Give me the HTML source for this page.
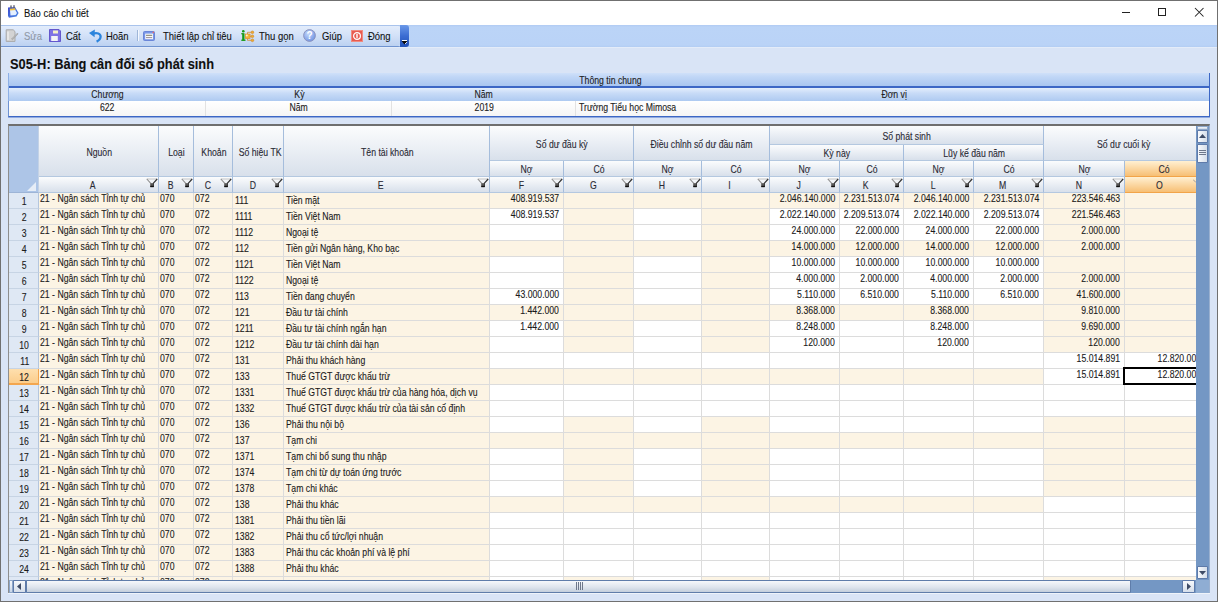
<!DOCTYPE html>
<html><head><meta charset="utf-8"><title>Báo cáo chi tiết</title>
<style>
*{box-sizing:border-box;margin:0;padding:0}
html,body{width:1218px;height:602px;overflow:hidden}
body{position:relative;background:#D9E4F6;font-family:"Liberation Sans",sans-serif;font-size:11px;color:#1b1b1b}
.a{position:absolute}
.t{position:absolute;white-space:nowrap;line-height:12px}
.s{display:inline-block;transform:scaleX(.86);transform-origin:0 0;-webkit-text-stroke:0.1px currentColor}
.g{position:absolute;white-space:nowrap;font-size:11px;line-height:12px}
.gs{display:inline-block;transform:scaleX(.79);transform-origin:0 0;-webkit-text-stroke:0.12px currentColor}
.gr .gs{transform-origin:100% 0}
.gc .gs{transform-origin:50% 0}
.hd{position:absolute;border-right:1px solid #A5BDDC;border-bottom:1px solid #B4C8E0;text-align:center;color:#26262b}
.cl{position:absolute;height:16px;border-right:1px solid #DCDCDC;border-bottom:1px solid #DCDCDC}
.filt{position:absolute;width:10px;height:9px}
</style></head><body>

<div class="a" style="left:0;top:0;width:1218px;height:602px;border:1px solid #707070;"></div>
<div class="a" style="left:1px;top:1px;width:1216px;height:24px;background:#fff"></div>
<svg class="a" style="left:4px;top:2px" width="20" height="20" viewBox="0 0 20 20">
<defs><linearGradient id="tg" x1="0" y1="0" x2="1" y2="1"><stop offset="0" stop-color="#3a48cf"/><stop offset="1" stop-color="#4f8fe6"/></linearGradient></defs>
<path d="M4 5.5 L11 5 L14.6 11 L12.6 14.6 L5 15.8 L4 14 Z" fill="url(#tg)"/>
<path d="M6 8 L11 7.5 L13 11 L11.6 13 L6.5 13.6 Z" fill="#e4f0ff"/>
<path d="M5.7 6.7 L11 6.2 L11.6 8 L6 8.6 Z" fill="#f3c13a"/>
<rect x="6.3" y="3.4" width="1.4" height="2.8" fill="#626270"/><rect x="9.3" y="3.2" width="1.4" height="2.8" fill="#626270"/>
</svg>
<div class="t" style="left:24px;top:7px;font-size:11px;color:#111"><span class="s">Báo cáo chi tiết</span></div>
<div class="a" style="left:1122px;top:12px;width:8px;height:1px;background:#222"></div>
<div class="a" style="left:1158px;top:8px;width:8px;height:8px;border:1px solid #222"></div>
<svg class="a" style="left:1194px;top:7px" width="11" height="11" viewBox="0 0 11 11"><path d="M1 1 L9.5 9.5 M9.5 1 L1 9.5" stroke="#222" stroke-width="1.05"/></svg>
<div class="a" style="left:1px;top:25px;width:1216px;height:22px;background:linear-gradient(#B0CBF3 0px,#BBD4F7 2px,#BAD3F7 20px,#B3CDF3 22px)"></div>
<div class="a" style="left:1px;top:47px;width:1216px;height:1px;background:#E4ECF9"></div>
<div class="a" style="left:1px;top:25px;width:400px;height:22px;background:linear-gradient(#E2ECFB 0%,#D4E2F8 45%,#BCD1F1 100%);border-top:1px solid #A9C3EC;border-bottom:1px solid #6F93D0;border-radius:0 3px 3px 0;box-shadow:inset -1px 0 0 #EEF4FD"></div>
<div class="a" style="left:400px;top:25px;width:9px;height:22px;background:linear-gradient(#6A98E8,#3B6CD2 50%,#2352B8);border-radius:0 3px 3px 0"></div>
<div class="a" style="left:402px;top:40px;width:5px;height:1px;background:#fff"></div>
<svg class="a" style="left:401px;top:41px" width="7" height="4"><path d="M0.5 0 L6.5 0 L3.5 3.5Z" fill="#0a0a0a"/><path d="M4 3 L6 1" stroke="#fff" stroke-width=".8"/></svg>
<svg class="a" style="left:5px;top:29px" width="14" height="14" viewBox="0 0 14 14">
<path d="M1.2 0.8 H8.2 L10 2.6 V12.4 H1.2 Z" fill="#d3d3d3" stroke="#a9a9a9" stroke-width="1"/><path d="M3 2.5 V11" stroke="#eeeeee" stroke-width="1.4"/><path d="M6.5 10 L12.5 4 L13 5 L7.5 10.8 Z" fill="#b8b8b8" stroke="#9c9c9c" stroke-width=".6"/></svg>
<div class="t" style="left:24px;top:30px;color:#8f98a6"><span class="s">Sửa</span></div>
<svg class="a" style="left:49px;top:29px" width="12" height="13" viewBox="0 0 12 13">
<path d="M0.5 0.5 H10 L11.5 2 V12.5 H0.5 Z" fill="#7f72e4" stroke="#6457cc" stroke-width="1"/><rect x="4" y="1.5" width="5" height="3" fill="#f4f0c8"/><rect x="2.2" y="7" width="6.6" height="5" fill="#f3f3f7"/></svg>
<div class="t" style="left:66px;top:30px;color:#111"><span class="s">Cất</span></div>
<svg class="a" style="left:88px;top:28px" width="15" height="15" viewBox="0 0 15 15">
<path d="M5 5.6 C9 4.2 12.6 5.6 12.6 8.6 C12.6 11 10.8 12.6 8.6 13.6" fill="none" stroke="#2c84dc" stroke-width="2.3"/><path d="M1 5 L6.8 1.6 L6.6 9.2 Z" fill="#2c84dc"/></svg>
<div class="t" style="left:106px;top:30px;color:#111"><span class="s">Hoãn</span></div>
<div class="a" style="left:137px;top:30px;width:1px;height:11px;background:#9fb6d8;box-shadow:1px 0 0 #f4f8ff"></div>
<svg class="a" style="left:143px;top:31px" width="12" height="10" viewBox="0 0 12 10">
<rect x="0.5" y="0.5" width="11" height="9" rx="1" fill="#7896e6" stroke="#6a86d8"/><rect x="2.2" y="2.6" width="7.8" height="5.6" fill="#f6f8fc"/><path d="M3 4.3 H9.2" stroke="#7d7f66" stroke-width="1"/><path d="M3 6.6 H9.2" stroke="#9a8f9a" stroke-width="1"/><circle cx="10.3" cy="1.4" r=".8" fill="#e66"/></svg>
<div class="t" style="left:163px;top:30px;color:#111"><span class="s">Thiết lập chỉ tiêu</span></div>
<svg class="a" style="left:236px;top:26px" width="24" height="20" viewBox="0 0 24 20">
<circle cx="7.3" cy="5.2" r="1.3" fill="#169a16"/><rect x="6.2" y="7.2" width="2.3" height="7.2" fill="#169a16"/><rect x="5.2" y="7.2" width="2" height="1.1" fill="#169a16"/><rect x="5.3" y="13.6" width="4.2" height="1.3" fill="#169a16"/>
<path d="M11.5 8 V6.3 H15.3 M14 10.3 H15.3 M11.5 12.5 V14.3 H15.3" fill="none" stroke="#cf8a32" stroke-width=".8"/>
<rect x="9.3" y="8" width="4.8" height="4.6" fill="#f2b43a" stroke="#d98c22" stroke-width=".6"/><circle cx="10.8" cy="9.5" r="1" fill="#fff3c8"/>
<circle cx="16.4" cy="6.3" r="1.4" fill="#eeaa33" stroke="#c98328" stroke-width=".5"/><circle cx="16.4" cy="10.3" r="1.4" fill="#eeaa33" stroke="#c98328" stroke-width=".5"/><circle cx="16.4" cy="14.3" r="1.4" fill="#eeaa33" stroke="#c98328" stroke-width=".5"/></svg>
<div class="t" style="left:259px;top:30px;color:#111"><span class="s">Thu gọn</span></div>
<svg class="a" style="left:303px;top:29px" width="13" height="13" viewBox="0 0 13 13">
<defs><radialGradient id="hg" cx=".4" cy=".35" r=".7"><stop offset="0" stop-color="#c4d8fb"/><stop offset="1" stop-color="#6f93e3"/></radialGradient></defs>
<circle cx="6.5" cy="6.5" r="5.9" fill="url(#hg)" stroke="#8a8fb8" stroke-width=".9"/>
<text x="6.6" y="10.3" font-size="10" font-family="Liberation Sans" font-weight="bold" text-anchor="middle" fill="#fff">?</text></svg>
<div class="t" style="left:322px;top:30px;color:#111"><span class="s">Giúp</span></div>
<svg class="a" style="left:351px;top:30px" width="12" height="12" viewBox="0 0 12 12">
<rect x="0.5" y="0.5" width="11" height="11" fill="#e85b50" stroke="#f08b80"/><circle cx="6" cy="6" r="3.4" fill="none" stroke="#fff" stroke-width="1.2"/><rect x="5.3" y="3.8" width="1.4" height="4.4" rx=".7" fill="#fff"/></svg>
<div class="t" style="left:368px;top:30px;color:#111"><span class="s">Đóng</span></div>
<div class="t" style="left:10px;top:56px;font-size:15px;line-height:16px;font-weight:bold;color:#101010"><span class="s" style="transform:scaleX(.856)">S05-H: Bảng cân đối số phát sinh</span></div>
<div class="a" style="left:8px;top:73px;width:1202px;height:44px;background:#fff"></div>
<div class="a" style="left:8px;top:73px;width:1202px;height:15px;background:linear-gradient(#CFE0F9,#C0D6F6 30%,#A9C6F0);border-bottom:2px solid #3C67C5"></div>
<div class="a" style="left:8px;top:88px;width:1202px;height:13px;background:linear-gradient(#E3EEFC,#C8DBF7 40%,#AECAF1)"></div>
<div class="a" style="left:8px;top:101px;width:1202px;height:16px;background:linear-gradient(#FFFFFF,#F5F5F5);border-bottom:1px solid #3C67C5;box-shadow:0 1px 0 rgba(60,103,197,.45);border-left:1px solid #6E92D2;border-right:1px solid #3C67C5"></div>
<div class="a" style="left:8px;top:73px;width:1px;height:28px;background:#8DB0E6"></div>
<div class="a" style="left:1209px;top:73px;width:1px;height:44px;background:#3C67C5"></div>
<div class="a" style="left:205px;top:101px;width:1px;height:15px;background:#E2E2E2"></div>
<div class="a" style="left:391px;top:101px;width:1px;height:15px;background:#E2E2E2"></div>
<div class="a" style="left:575px;top:101px;width:1px;height:15px;background:#E2E2E2"></div>
<div class="g gc" style="left:9px;top:74px;width:1202px;text-align:center;color:#222"><span class="gs" style="transform:scaleX(0.79)">Thông tin chung</span></div>
<div class="g gc" style="left:9px;top:88px;width:197px;text-align:center;color:#222"><span class="gs" style="transform:scaleX(0.79)">Chương</span></div>
<div class="g gc" style="left:206px;top:88px;width:186px;text-align:center;color:#222"><span class="gs" style="transform:scaleX(0.79)">Kỳ</span></div>
<div class="g gc" style="left:392px;top:88px;width:184px;text-align:center;color:#222"><span class="gs" style="transform:scaleX(0.79)">Năm</span></div>
<div class="g gc" style="left:576px;top:88px;width:636px;text-align:center;color:#222"><span class="gs" style="transform:scaleX(0.79)">Đơn vị</span></div>
<div class="g gc" style="left:9px;top:101px;width:197px;text-align:center;color:#222"><span class="gs" style="transform:scaleX(0.79)">622</span></div>
<div class="g gc" style="left:206px;top:101px;width:186px;text-align:center;color:#222"><span class="gs" style="transform:scaleX(0.79)">Năm</span></div>
<div class="g gc" style="left:392px;top:101px;width:184px;text-align:center;color:#222"><span class="gs" style="transform:scaleX(0.79)">2019</span></div>
<div class="g" style="left:579px;top:101px;color:#222"><span class="gs">Trường Tiểu học Mimosa</span></div>
<div class="a" style="left:8px;top:124px;width:1202px;height:470px;background:#FFFFFF;border-left:1px solid #8E8E8E;border-top:2px solid #6F6F6F;border-right:1px solid #9AB0CF;border-bottom:1px solid #6F86AC"></div>
<div class="a" style="left:9px;top:126px;width:1187px;height:454px;overflow:hidden">
<div class="cl" style="left:30px;top:67px;width:120px;background:#FCF4E4"></div>
<div class="cl" style="left:150px;top:67px;width:35px;background:#FCF4E4"></div>
<div class="cl" style="left:185px;top:67px;width:39px;background:#FCF4E4"></div>
<div class="cl" style="left:224px;top:67px;width:51px;background:#FCF4E4"></div>
<div class="cl" style="left:275px;top:67px;width:206px;background:#FCF4E4"></div>
<div class="cl" style="left:481px;top:67px;width:74px;background:#FCF4E4"></div>
<div class="cl" style="left:555px;top:67px;width:70px;background:#FCF4E4"></div>
<div class="cl" style="left:625px;top:67px;width:68px;background:#FCF4E4"></div>
<div class="cl" style="left:693px;top:67px;width:68px;background:#FCF4E4"></div>
<div class="cl" style="left:761px;top:67px;width:70px;background:#FCF4E4"></div>
<div class="cl" style="left:831px;top:67px;width:64px;background:#FCF4E4"></div>
<div class="cl" style="left:895px;top:67px;width:70px;background:#FCF4E4"></div>
<div class="cl" style="left:965px;top:67px;width:70px;background:#FCF4E4"></div>
<div class="cl" style="left:1035px;top:67px;width:81px;background:#FCF4E4"></div>
<div class="cl" style="left:1116px;top:67px;width:81px;background:#FCF4E4"></div>
<div class="a" style="left:0px;top:67px;width:30px;height:16px;background:#DFE8F4;border-bottom:1px solid #C7D4E4;border-right:1px solid #B4C6DE"></div>
<div class="g gc" style="left:1px;top:69px;width:29px;text-align:center"><span class="gs">1</span></div>
<div class="g" style="left:31px;top:66px;"><span class="gs">21 - Ngân sách Tỉnh tự chủ</span></div>
<div class="g" style="left:151px;top:66px;"><span class="gs">070</span></div>
<div class="g" style="left:186px;top:66px;"><span class="gs">072</span></div>
<div class="g" style="left:226px;top:68px;"><span class="gs">111</span></div>
<div class="g" style="left:277px;top:68px;"><span class="gs">Tiền mặt</span></div>
<div class="g gr" style="right:637px;top:66px"><span class="gs">408.919.537</span></div>
<div class="g gr" style="right:361px;top:66px"><span class="gs">2.046.140.000</span></div>
<div class="g gr" style="right:297px;top:66px"><span class="gs">2.231.513.074</span></div>
<div class="g gr" style="right:227px;top:66px"><span class="gs">2.046.140.000</span></div>
<div class="g gr" style="right:157px;top:66px"><span class="gs">2.231.513.074</span></div>
<div class="g gr" style="right:76px;top:66px"><span class="gs">223.546.463</span></div>
<div class="cl" style="left:30px;top:83px;width:120px;background:#FCF4E4"></div>
<div class="cl" style="left:150px;top:83px;width:35px;background:#FCF4E4"></div>
<div class="cl" style="left:185px;top:83px;width:39px;background:#FCF4E4"></div>
<div class="cl" style="left:224px;top:83px;width:51px;background:#FCF4E4"></div>
<div class="cl" style="left:275px;top:83px;width:206px;background:#FCF4E4"></div>
<div class="cl" style="left:481px;top:83px;width:74px;background:#FFFFFF"></div>
<div class="cl" style="left:555px;top:83px;width:70px;background:#FCF4E4"></div>
<div class="cl" style="left:625px;top:83px;width:68px;background:#FFFFFF"></div>
<div class="cl" style="left:693px;top:83px;width:68px;background:#FCF4E4"></div>
<div class="cl" style="left:761px;top:83px;width:70px;background:#FFFFFF"></div>
<div class="cl" style="left:831px;top:83px;width:64px;background:#FFFFFF"></div>
<div class="cl" style="left:895px;top:83px;width:70px;background:#FFFFFF"></div>
<div class="cl" style="left:965px;top:83px;width:70px;background:#FFFFFF"></div>
<div class="cl" style="left:1035px;top:83px;width:81px;background:#FCF4E4"></div>
<div class="cl" style="left:1116px;top:83px;width:81px;background:#FCF4E4"></div>
<div class="a" style="left:0px;top:83px;width:30px;height:16px;background:#DFE8F4;border-bottom:1px solid #C7D4E4;border-right:1px solid #B4C6DE"></div>
<div class="g gc" style="left:1px;top:85px;width:29px;text-align:center"><span class="gs">2</span></div>
<div class="g" style="left:31px;top:82px;"><span class="gs">21 - Ngân sách Tỉnh tự chủ</span></div>
<div class="g" style="left:151px;top:82px;"><span class="gs">070</span></div>
<div class="g" style="left:186px;top:82px;"><span class="gs">072</span></div>
<div class="g" style="left:226px;top:84px;"><span class="gs">1111</span></div>
<div class="g" style="left:277px;top:84px;"><span class="gs">Tiền Việt Nam</span></div>
<div class="g gr" style="right:637px;top:82px"><span class="gs">408.919.537</span></div>
<div class="g gr" style="right:361px;top:82px"><span class="gs">2.022.140.000</span></div>
<div class="g gr" style="right:297px;top:82px"><span class="gs">2.209.513.074</span></div>
<div class="g gr" style="right:227px;top:82px"><span class="gs">2.022.140.000</span></div>
<div class="g gr" style="right:157px;top:82px"><span class="gs">2.209.513.074</span></div>
<div class="g gr" style="right:76px;top:82px"><span class="gs">221.546.463</span></div>
<div class="cl" style="left:30px;top:99px;width:120px;background:#FCF4E4"></div>
<div class="cl" style="left:150px;top:99px;width:35px;background:#FCF4E4"></div>
<div class="cl" style="left:185px;top:99px;width:39px;background:#FCF4E4"></div>
<div class="cl" style="left:224px;top:99px;width:51px;background:#FCF4E4"></div>
<div class="cl" style="left:275px;top:99px;width:206px;background:#FCF4E4"></div>
<div class="cl" style="left:481px;top:99px;width:74px;background:#FFFFFF"></div>
<div class="cl" style="left:555px;top:99px;width:70px;background:#FCF4E4"></div>
<div class="cl" style="left:625px;top:99px;width:68px;background:#FFFFFF"></div>
<div class="cl" style="left:693px;top:99px;width:68px;background:#FCF4E4"></div>
<div class="cl" style="left:761px;top:99px;width:70px;background:#FFFFFF"></div>
<div class="cl" style="left:831px;top:99px;width:64px;background:#FFFFFF"></div>
<div class="cl" style="left:895px;top:99px;width:70px;background:#FFFFFF"></div>
<div class="cl" style="left:965px;top:99px;width:70px;background:#FFFFFF"></div>
<div class="cl" style="left:1035px;top:99px;width:81px;background:#FCF4E4"></div>
<div class="cl" style="left:1116px;top:99px;width:81px;background:#FCF4E4"></div>
<div class="a" style="left:0px;top:99px;width:30px;height:16px;background:#DFE8F4;border-bottom:1px solid #C7D4E4;border-right:1px solid #B4C6DE"></div>
<div class="g gc" style="left:1px;top:101px;width:29px;text-align:center"><span class="gs">3</span></div>
<div class="g" style="left:31px;top:98px;"><span class="gs">21 - Ngân sách Tỉnh tự chủ</span></div>
<div class="g" style="left:151px;top:98px;"><span class="gs">070</span></div>
<div class="g" style="left:186px;top:98px;"><span class="gs">072</span></div>
<div class="g" style="left:226px;top:100px;"><span class="gs">1112</span></div>
<div class="g" style="left:277px;top:100px;"><span class="gs">Ngoại tệ</span></div>
<div class="g gr" style="right:361px;top:98px"><span class="gs">24.000.000</span></div>
<div class="g gr" style="right:297px;top:98px"><span class="gs">22.000.000</span></div>
<div class="g gr" style="right:227px;top:98px"><span class="gs">24.000.000</span></div>
<div class="g gr" style="right:157px;top:98px"><span class="gs">22.000.000</span></div>
<div class="g gr" style="right:76px;top:98px"><span class="gs">2.000.000</span></div>
<div class="cl" style="left:30px;top:115px;width:120px;background:#FCF4E4"></div>
<div class="cl" style="left:150px;top:115px;width:35px;background:#FCF4E4"></div>
<div class="cl" style="left:185px;top:115px;width:39px;background:#FCF4E4"></div>
<div class="cl" style="left:224px;top:115px;width:51px;background:#FCF4E4"></div>
<div class="cl" style="left:275px;top:115px;width:206px;background:#FCF4E4"></div>
<div class="cl" style="left:481px;top:115px;width:74px;background:#FCF4E4"></div>
<div class="cl" style="left:555px;top:115px;width:70px;background:#FCF4E4"></div>
<div class="cl" style="left:625px;top:115px;width:68px;background:#FCF4E4"></div>
<div class="cl" style="left:693px;top:115px;width:68px;background:#FCF4E4"></div>
<div class="cl" style="left:761px;top:115px;width:70px;background:#FCF4E4"></div>
<div class="cl" style="left:831px;top:115px;width:64px;background:#FCF4E4"></div>
<div class="cl" style="left:895px;top:115px;width:70px;background:#FCF4E4"></div>
<div class="cl" style="left:965px;top:115px;width:70px;background:#FCF4E4"></div>
<div class="cl" style="left:1035px;top:115px;width:81px;background:#FCF4E4"></div>
<div class="cl" style="left:1116px;top:115px;width:81px;background:#FCF4E4"></div>
<div class="a" style="left:0px;top:115px;width:30px;height:16px;background:#DFE8F4;border-bottom:1px solid #C7D4E4;border-right:1px solid #B4C6DE"></div>
<div class="g gc" style="left:1px;top:117px;width:29px;text-align:center"><span class="gs">4</span></div>
<div class="g" style="left:31px;top:114px;"><span class="gs">21 - Ngân sách Tỉnh tự chủ</span></div>
<div class="g" style="left:151px;top:114px;"><span class="gs">070</span></div>
<div class="g" style="left:186px;top:114px;"><span class="gs">072</span></div>
<div class="g" style="left:226px;top:116px;"><span class="gs">112</span></div>
<div class="g" style="left:277px;top:116px;"><span class="gs">Tiền gửi Ngân hàng, Kho bạc</span></div>
<div class="g gr" style="right:361px;top:114px"><span class="gs">14.000.000</span></div>
<div class="g gr" style="right:297px;top:114px"><span class="gs">12.000.000</span></div>
<div class="g gr" style="right:227px;top:114px"><span class="gs">14.000.000</span></div>
<div class="g gr" style="right:157px;top:114px"><span class="gs">12.000.000</span></div>
<div class="g gr" style="right:76px;top:114px"><span class="gs">2.000.000</span></div>
<div class="cl" style="left:30px;top:131px;width:120px;background:#FCF4E4"></div>
<div class="cl" style="left:150px;top:131px;width:35px;background:#FCF4E4"></div>
<div class="cl" style="left:185px;top:131px;width:39px;background:#FCF4E4"></div>
<div class="cl" style="left:224px;top:131px;width:51px;background:#FCF4E4"></div>
<div class="cl" style="left:275px;top:131px;width:206px;background:#FCF4E4"></div>
<div class="cl" style="left:481px;top:131px;width:74px;background:#FFFFFF"></div>
<div class="cl" style="left:555px;top:131px;width:70px;background:#FCF4E4"></div>
<div class="cl" style="left:625px;top:131px;width:68px;background:#FFFFFF"></div>
<div class="cl" style="left:693px;top:131px;width:68px;background:#FCF4E4"></div>
<div class="cl" style="left:761px;top:131px;width:70px;background:#FFFFFF"></div>
<div class="cl" style="left:831px;top:131px;width:64px;background:#FFFFFF"></div>
<div class="cl" style="left:895px;top:131px;width:70px;background:#FFFFFF"></div>
<div class="cl" style="left:965px;top:131px;width:70px;background:#FFFFFF"></div>
<div class="cl" style="left:1035px;top:131px;width:81px;background:#FCF4E4"></div>
<div class="cl" style="left:1116px;top:131px;width:81px;background:#FCF4E4"></div>
<div class="a" style="left:0px;top:131px;width:30px;height:16px;background:#DFE8F4;border-bottom:1px solid #C7D4E4;border-right:1px solid #B4C6DE"></div>
<div class="g gc" style="left:1px;top:133px;width:29px;text-align:center"><span class="gs">5</span></div>
<div class="g" style="left:31px;top:130px;"><span class="gs">21 - Ngân sách Tỉnh tự chủ</span></div>
<div class="g" style="left:151px;top:130px;"><span class="gs">070</span></div>
<div class="g" style="left:186px;top:130px;"><span class="gs">072</span></div>
<div class="g" style="left:226px;top:132px;"><span class="gs">1121</span></div>
<div class="g" style="left:277px;top:132px;"><span class="gs">Tiền Việt Nam</span></div>
<div class="g gr" style="right:361px;top:130px"><span class="gs">10.000.000</span></div>
<div class="g gr" style="right:297px;top:130px"><span class="gs">10.000.000</span></div>
<div class="g gr" style="right:227px;top:130px"><span class="gs">10.000.000</span></div>
<div class="g gr" style="right:157px;top:130px"><span class="gs">10.000.000</span></div>
<div class="cl" style="left:30px;top:147px;width:120px;background:#FCF4E4"></div>
<div class="cl" style="left:150px;top:147px;width:35px;background:#FCF4E4"></div>
<div class="cl" style="left:185px;top:147px;width:39px;background:#FCF4E4"></div>
<div class="cl" style="left:224px;top:147px;width:51px;background:#FCF4E4"></div>
<div class="cl" style="left:275px;top:147px;width:206px;background:#FCF4E4"></div>
<div class="cl" style="left:481px;top:147px;width:74px;background:#FFFFFF"></div>
<div class="cl" style="left:555px;top:147px;width:70px;background:#FCF4E4"></div>
<div class="cl" style="left:625px;top:147px;width:68px;background:#FFFFFF"></div>
<div class="cl" style="left:693px;top:147px;width:68px;background:#FCF4E4"></div>
<div class="cl" style="left:761px;top:147px;width:70px;background:#FFFFFF"></div>
<div class="cl" style="left:831px;top:147px;width:64px;background:#FFFFFF"></div>
<div class="cl" style="left:895px;top:147px;width:70px;background:#FFFFFF"></div>
<div class="cl" style="left:965px;top:147px;width:70px;background:#FFFFFF"></div>
<div class="cl" style="left:1035px;top:147px;width:81px;background:#FCF4E4"></div>
<div class="cl" style="left:1116px;top:147px;width:81px;background:#FCF4E4"></div>
<div class="a" style="left:0px;top:147px;width:30px;height:16px;background:#DFE8F4;border-bottom:1px solid #C7D4E4;border-right:1px solid #B4C6DE"></div>
<div class="g gc" style="left:1px;top:149px;width:29px;text-align:center"><span class="gs">6</span></div>
<div class="g" style="left:31px;top:146px;"><span class="gs">21 - Ngân sách Tỉnh tự chủ</span></div>
<div class="g" style="left:151px;top:146px;"><span class="gs">070</span></div>
<div class="g" style="left:186px;top:146px;"><span class="gs">072</span></div>
<div class="g" style="left:226px;top:148px;"><span class="gs">1122</span></div>
<div class="g" style="left:277px;top:148px;"><span class="gs">Ngoại tệ</span></div>
<div class="g gr" style="right:361px;top:146px"><span class="gs">4.000.000</span></div>
<div class="g gr" style="right:297px;top:146px"><span class="gs">2.000.000</span></div>
<div class="g gr" style="right:227px;top:146px"><span class="gs">4.000.000</span></div>
<div class="g gr" style="right:157px;top:146px"><span class="gs">2.000.000</span></div>
<div class="g gr" style="right:76px;top:146px"><span class="gs">2.000.000</span></div>
<div class="cl" style="left:30px;top:163px;width:120px;background:#FCF4E4"></div>
<div class="cl" style="left:150px;top:163px;width:35px;background:#FCF4E4"></div>
<div class="cl" style="left:185px;top:163px;width:39px;background:#FCF4E4"></div>
<div class="cl" style="left:224px;top:163px;width:51px;background:#FCF4E4"></div>
<div class="cl" style="left:275px;top:163px;width:206px;background:#FCF4E4"></div>
<div class="cl" style="left:481px;top:163px;width:74px;background:#FFFFFF"></div>
<div class="cl" style="left:555px;top:163px;width:70px;background:#FCF4E4"></div>
<div class="cl" style="left:625px;top:163px;width:68px;background:#FFFFFF"></div>
<div class="cl" style="left:693px;top:163px;width:68px;background:#FCF4E4"></div>
<div class="cl" style="left:761px;top:163px;width:70px;background:#FFFFFF"></div>
<div class="cl" style="left:831px;top:163px;width:64px;background:#FFFFFF"></div>
<div class="cl" style="left:895px;top:163px;width:70px;background:#FFFFFF"></div>
<div class="cl" style="left:965px;top:163px;width:70px;background:#FFFFFF"></div>
<div class="cl" style="left:1035px;top:163px;width:81px;background:#FCF4E4"></div>
<div class="cl" style="left:1116px;top:163px;width:81px;background:#FCF4E4"></div>
<div class="a" style="left:0px;top:163px;width:30px;height:16px;background:#DFE8F4;border-bottom:1px solid #C7D4E4;border-right:1px solid #B4C6DE"></div>
<div class="g gc" style="left:1px;top:165px;width:29px;text-align:center"><span class="gs">7</span></div>
<div class="g" style="left:31px;top:162px;"><span class="gs">21 - Ngân sách Tỉnh tự chủ</span></div>
<div class="g" style="left:151px;top:162px;"><span class="gs">070</span></div>
<div class="g" style="left:186px;top:162px;"><span class="gs">072</span></div>
<div class="g" style="left:226px;top:164px;"><span class="gs">113</span></div>
<div class="g" style="left:277px;top:164px;"><span class="gs">Tiền đang chuyển</span></div>
<div class="g gr" style="right:637px;top:162px"><span class="gs">43.000.000</span></div>
<div class="g gr" style="right:361px;top:162px"><span class="gs">5.110.000</span></div>
<div class="g gr" style="right:297px;top:162px"><span class="gs">6.510.000</span></div>
<div class="g gr" style="right:227px;top:162px"><span class="gs">5.110.000</span></div>
<div class="g gr" style="right:157px;top:162px"><span class="gs">6.510.000</span></div>
<div class="g gr" style="right:76px;top:162px"><span class="gs">41.600.000</span></div>
<div class="cl" style="left:30px;top:179px;width:120px;background:#FCF4E4"></div>
<div class="cl" style="left:150px;top:179px;width:35px;background:#FCF4E4"></div>
<div class="cl" style="left:185px;top:179px;width:39px;background:#FCF4E4"></div>
<div class="cl" style="left:224px;top:179px;width:51px;background:#FCF4E4"></div>
<div class="cl" style="left:275px;top:179px;width:206px;background:#FCF4E4"></div>
<div class="cl" style="left:481px;top:179px;width:74px;background:#FCF4E4"></div>
<div class="cl" style="left:555px;top:179px;width:70px;background:#FCF4E4"></div>
<div class="cl" style="left:625px;top:179px;width:68px;background:#FCF4E4"></div>
<div class="cl" style="left:693px;top:179px;width:68px;background:#FCF4E4"></div>
<div class="cl" style="left:761px;top:179px;width:70px;background:#FCF4E4"></div>
<div class="cl" style="left:831px;top:179px;width:64px;background:#FCF4E4"></div>
<div class="cl" style="left:895px;top:179px;width:70px;background:#FCF4E4"></div>
<div class="cl" style="left:965px;top:179px;width:70px;background:#FCF4E4"></div>
<div class="cl" style="left:1035px;top:179px;width:81px;background:#FCF4E4"></div>
<div class="cl" style="left:1116px;top:179px;width:81px;background:#FCF4E4"></div>
<div class="a" style="left:0px;top:179px;width:30px;height:16px;background:#DFE8F4;border-bottom:1px solid #C7D4E4;border-right:1px solid #B4C6DE"></div>
<div class="g gc" style="left:1px;top:181px;width:29px;text-align:center"><span class="gs">8</span></div>
<div class="g" style="left:31px;top:178px;"><span class="gs">21 - Ngân sách Tỉnh tự chủ</span></div>
<div class="g" style="left:151px;top:178px;"><span class="gs">070</span></div>
<div class="g" style="left:186px;top:178px;"><span class="gs">072</span></div>
<div class="g" style="left:226px;top:180px;"><span class="gs">121</span></div>
<div class="g" style="left:277px;top:180px;"><span class="gs">Đầu tư tài chính</span></div>
<div class="g gr" style="right:637px;top:178px"><span class="gs">1.442.000</span></div>
<div class="g gr" style="right:361px;top:178px"><span class="gs">8.368.000</span></div>
<div class="g gr" style="right:227px;top:178px"><span class="gs">8.368.000</span></div>
<div class="g gr" style="right:76px;top:178px"><span class="gs">9.810.000</span></div>
<div class="cl" style="left:30px;top:195px;width:120px;background:#FCF4E4"></div>
<div class="cl" style="left:150px;top:195px;width:35px;background:#FCF4E4"></div>
<div class="cl" style="left:185px;top:195px;width:39px;background:#FCF4E4"></div>
<div class="cl" style="left:224px;top:195px;width:51px;background:#FCF4E4"></div>
<div class="cl" style="left:275px;top:195px;width:206px;background:#FCF4E4"></div>
<div class="cl" style="left:481px;top:195px;width:74px;background:#FFFFFF"></div>
<div class="cl" style="left:555px;top:195px;width:70px;background:#FCF4E4"></div>
<div class="cl" style="left:625px;top:195px;width:68px;background:#FFFFFF"></div>
<div class="cl" style="left:693px;top:195px;width:68px;background:#FCF4E4"></div>
<div class="cl" style="left:761px;top:195px;width:70px;background:#FFFFFF"></div>
<div class="cl" style="left:831px;top:195px;width:64px;background:#FFFFFF"></div>
<div class="cl" style="left:895px;top:195px;width:70px;background:#FFFFFF"></div>
<div class="cl" style="left:965px;top:195px;width:70px;background:#FFFFFF"></div>
<div class="cl" style="left:1035px;top:195px;width:81px;background:#FCF4E4"></div>
<div class="cl" style="left:1116px;top:195px;width:81px;background:#FCF4E4"></div>
<div class="a" style="left:0px;top:195px;width:30px;height:16px;background:#DFE8F4;border-bottom:1px solid #C7D4E4;border-right:1px solid #B4C6DE"></div>
<div class="g gc" style="left:1px;top:197px;width:29px;text-align:center"><span class="gs">9</span></div>
<div class="g" style="left:31px;top:194px;"><span class="gs">21 - Ngân sách Tỉnh tự chủ</span></div>
<div class="g" style="left:151px;top:194px;"><span class="gs">070</span></div>
<div class="g" style="left:186px;top:194px;"><span class="gs">072</span></div>
<div class="g" style="left:226px;top:196px;"><span class="gs">1211</span></div>
<div class="g" style="left:277px;top:196px;"><span class="gs">Đầu tư tài chính ngắn hạn</span></div>
<div class="g gr" style="right:637px;top:194px"><span class="gs">1.442.000</span></div>
<div class="g gr" style="right:361px;top:194px"><span class="gs">8.248.000</span></div>
<div class="g gr" style="right:227px;top:194px"><span class="gs">8.248.000</span></div>
<div class="g gr" style="right:76px;top:194px"><span class="gs">9.690.000</span></div>
<div class="cl" style="left:30px;top:211px;width:120px;background:#FCF4E4"></div>
<div class="cl" style="left:150px;top:211px;width:35px;background:#FCF4E4"></div>
<div class="cl" style="left:185px;top:211px;width:39px;background:#FCF4E4"></div>
<div class="cl" style="left:224px;top:211px;width:51px;background:#FCF4E4"></div>
<div class="cl" style="left:275px;top:211px;width:206px;background:#FCF4E4"></div>
<div class="cl" style="left:481px;top:211px;width:74px;background:#FFFFFF"></div>
<div class="cl" style="left:555px;top:211px;width:70px;background:#FCF4E4"></div>
<div class="cl" style="left:625px;top:211px;width:68px;background:#FFFFFF"></div>
<div class="cl" style="left:693px;top:211px;width:68px;background:#FCF4E4"></div>
<div class="cl" style="left:761px;top:211px;width:70px;background:#FFFFFF"></div>
<div class="cl" style="left:831px;top:211px;width:64px;background:#FFFFFF"></div>
<div class="cl" style="left:895px;top:211px;width:70px;background:#FFFFFF"></div>
<div class="cl" style="left:965px;top:211px;width:70px;background:#FFFFFF"></div>
<div class="cl" style="left:1035px;top:211px;width:81px;background:#FCF4E4"></div>
<div class="cl" style="left:1116px;top:211px;width:81px;background:#FCF4E4"></div>
<div class="a" style="left:0px;top:211px;width:30px;height:16px;background:#DFE8F4;border-bottom:1px solid #C7D4E4;border-right:1px solid #B4C6DE"></div>
<div class="g gc" style="left:1px;top:213px;width:29px;text-align:center"><span class="gs">10</span></div>
<div class="g" style="left:31px;top:210px;"><span class="gs">21 - Ngân sách Tỉnh tự chủ</span></div>
<div class="g" style="left:151px;top:210px;"><span class="gs">070</span></div>
<div class="g" style="left:186px;top:210px;"><span class="gs">072</span></div>
<div class="g" style="left:226px;top:212px;"><span class="gs">1212</span></div>
<div class="g" style="left:277px;top:212px;"><span class="gs">Đầu tư tài chính dài hạn</span></div>
<div class="g gr" style="right:361px;top:210px"><span class="gs">120.000</span></div>
<div class="g gr" style="right:227px;top:210px"><span class="gs">120.000</span></div>
<div class="g gr" style="right:76px;top:210px"><span class="gs">120.000</span></div>
<div class="cl" style="left:30px;top:227px;width:120px;background:#FCF4E4"></div>
<div class="cl" style="left:150px;top:227px;width:35px;background:#FCF4E4"></div>
<div class="cl" style="left:185px;top:227px;width:39px;background:#FCF4E4"></div>
<div class="cl" style="left:224px;top:227px;width:51px;background:#FCF4E4"></div>
<div class="cl" style="left:275px;top:227px;width:206px;background:#FCF4E4"></div>
<div class="cl" style="left:481px;top:227px;width:74px;background:#FFFFFF"></div>
<div class="cl" style="left:555px;top:227px;width:70px;background:#FFFFFF"></div>
<div class="cl" style="left:625px;top:227px;width:68px;background:#FFFFFF"></div>
<div class="cl" style="left:693px;top:227px;width:68px;background:#FFFFFF"></div>
<div class="cl" style="left:761px;top:227px;width:70px;background:#FFFFFF"></div>
<div class="cl" style="left:831px;top:227px;width:64px;background:#FFFFFF"></div>
<div class="cl" style="left:895px;top:227px;width:70px;background:#FFFFFF"></div>
<div class="cl" style="left:965px;top:227px;width:70px;background:#FFFFFF"></div>
<div class="cl" style="left:1035px;top:227px;width:81px;background:#FFFFFF"></div>
<div class="cl" style="left:1116px;top:227px;width:81px;background:#FFFFFF"></div>
<div class="a" style="left:0px;top:227px;width:30px;height:16px;background:#DFE8F4;border-bottom:1px solid #C7D4E4;border-right:1px solid #B4C6DE"></div>
<div class="g gc" style="left:1px;top:229px;width:29px;text-align:center"><span class="gs">11</span></div>
<div class="g" style="left:31px;top:226px;"><span class="gs">21 - Ngân sách Tỉnh tự chủ</span></div>
<div class="g" style="left:151px;top:226px;"><span class="gs">070</span></div>
<div class="g" style="left:186px;top:226px;"><span class="gs">072</span></div>
<div class="g" style="left:226px;top:228px;"><span class="gs">131</span></div>
<div class="g" style="left:277px;top:228px;"><span class="gs">Phải thu khách hàng</span></div>
<div class="g gr" style="right:76px;top:226px"><span class="gs">15.014.891</span></div>
<div class="g gr" style="right:-5px;top:226px"><span class="gs">12.820.000</span></div>
<div class="cl" style="left:30px;top:243px;width:120px;background:#FCF4E4"></div>
<div class="cl" style="left:150px;top:243px;width:35px;background:#FCF4E4"></div>
<div class="cl" style="left:185px;top:243px;width:39px;background:#FCF4E4"></div>
<div class="cl" style="left:224px;top:243px;width:51px;background:#FCF4E4"></div>
<div class="cl" style="left:275px;top:243px;width:206px;background:#FCF4E4"></div>
<div class="cl" style="left:481px;top:243px;width:74px;background:#FCF4E4"></div>
<div class="cl" style="left:555px;top:243px;width:70px;background:#FCF4E4"></div>
<div class="cl" style="left:625px;top:243px;width:68px;background:#FCF4E4"></div>
<div class="cl" style="left:693px;top:243px;width:68px;background:#FCF4E4"></div>
<div class="cl" style="left:761px;top:243px;width:70px;background:#FCF4E4"></div>
<div class="cl" style="left:831px;top:243px;width:64px;background:#FCF4E4"></div>
<div class="cl" style="left:895px;top:243px;width:70px;background:#FCF4E4"></div>
<div class="cl" style="left:965px;top:243px;width:70px;background:#FCF4E4"></div>
<div class="cl" style="left:1035px;top:243px;width:81px;background:#FFFFFF"></div>
<div class="cl" style="left:1116px;top:243px;width:81px;background:#FFFFFF"></div>
<div class="a" style="left:0px;top:243px;width:30px;height:16px;background:linear-gradient(#FEDFAE,#FBCD8C);border-bottom:2px solid #F3A64F;border-right:1px solid #F3A64F"></div>
<div class="g gc" style="left:1px;top:245px;width:29px;text-align:center"><span class="gs">12</span></div>
<div class="g" style="left:31px;top:242px;"><span class="gs">21 - Ngân sách Tỉnh tự chủ</span></div>
<div class="g" style="left:151px;top:242px;"><span class="gs">070</span></div>
<div class="g" style="left:186px;top:242px;"><span class="gs">072</span></div>
<div class="g" style="left:226px;top:244px;"><span class="gs">133</span></div>
<div class="g" style="left:277px;top:244px;"><span class="gs">Thuế GTGT được khấu trừ</span></div>
<div class="g gr" style="right:76px;top:242px"><span class="gs">15.014.891</span></div>
<div class="g gr" style="right:-5px;top:242px"><span class="gs">12.820.000</span></div>
<div class="cl" style="left:30px;top:259px;width:120px;background:#FCF4E4"></div>
<div class="cl" style="left:150px;top:259px;width:35px;background:#FCF4E4"></div>
<div class="cl" style="left:185px;top:259px;width:39px;background:#FCF4E4"></div>
<div class="cl" style="left:224px;top:259px;width:51px;background:#FCF4E4"></div>
<div class="cl" style="left:275px;top:259px;width:206px;background:#FCF4E4"></div>
<div class="cl" style="left:481px;top:259px;width:74px;background:#FFFFFF"></div>
<div class="cl" style="left:555px;top:259px;width:70px;background:#FFFFFF"></div>
<div class="cl" style="left:625px;top:259px;width:68px;background:#FFFFFF"></div>
<div class="cl" style="left:693px;top:259px;width:68px;background:#FFFFFF"></div>
<div class="cl" style="left:761px;top:259px;width:70px;background:#FFFFFF"></div>
<div class="cl" style="left:831px;top:259px;width:64px;background:#FFFFFF"></div>
<div class="cl" style="left:895px;top:259px;width:70px;background:#FFFFFF"></div>
<div class="cl" style="left:965px;top:259px;width:70px;background:#FFFFFF"></div>
<div class="cl" style="left:1035px;top:259px;width:81px;background:#FFFFFF"></div>
<div class="cl" style="left:1116px;top:259px;width:81px;background:#FFFFFF"></div>
<div class="a" style="left:0px;top:259px;width:30px;height:16px;background:#DFE8F4;border-bottom:1px solid #C7D4E4;border-right:1px solid #B4C6DE"></div>
<div class="g gc" style="left:1px;top:261px;width:29px;text-align:center"><span class="gs">13</span></div>
<div class="g" style="left:31px;top:258px;"><span class="gs">21 - Ngân sách Tỉnh tự chủ</span></div>
<div class="g" style="left:151px;top:258px;"><span class="gs">070</span></div>
<div class="g" style="left:186px;top:258px;"><span class="gs">072</span></div>
<div class="g" style="left:226px;top:260px;"><span class="gs">1331</span></div>
<div class="g" style="left:277px;top:260px;"><span class="gs">Thuế GTGT được khấu trừ của hàng hóa, dịch vụ</span></div>
<div class="cl" style="left:30px;top:275px;width:120px;background:#FCF4E4"></div>
<div class="cl" style="left:150px;top:275px;width:35px;background:#FCF4E4"></div>
<div class="cl" style="left:185px;top:275px;width:39px;background:#FCF4E4"></div>
<div class="cl" style="left:224px;top:275px;width:51px;background:#FCF4E4"></div>
<div class="cl" style="left:275px;top:275px;width:206px;background:#FCF4E4"></div>
<div class="cl" style="left:481px;top:275px;width:74px;background:#FFFFFF"></div>
<div class="cl" style="left:555px;top:275px;width:70px;background:#FFFFFF"></div>
<div class="cl" style="left:625px;top:275px;width:68px;background:#FFFFFF"></div>
<div class="cl" style="left:693px;top:275px;width:68px;background:#FFFFFF"></div>
<div class="cl" style="left:761px;top:275px;width:70px;background:#FFFFFF"></div>
<div class="cl" style="left:831px;top:275px;width:64px;background:#FFFFFF"></div>
<div class="cl" style="left:895px;top:275px;width:70px;background:#FFFFFF"></div>
<div class="cl" style="left:965px;top:275px;width:70px;background:#FFFFFF"></div>
<div class="cl" style="left:1035px;top:275px;width:81px;background:#FFFFFF"></div>
<div class="cl" style="left:1116px;top:275px;width:81px;background:#FFFFFF"></div>
<div class="a" style="left:0px;top:275px;width:30px;height:16px;background:#DFE8F4;border-bottom:1px solid #C7D4E4;border-right:1px solid #B4C6DE"></div>
<div class="g gc" style="left:1px;top:277px;width:29px;text-align:center"><span class="gs">14</span></div>
<div class="g" style="left:31px;top:274px;"><span class="gs">21 - Ngân sách Tỉnh tự chủ</span></div>
<div class="g" style="left:151px;top:274px;"><span class="gs">070</span></div>
<div class="g" style="left:186px;top:274px;"><span class="gs">072</span></div>
<div class="g" style="left:226px;top:276px;"><span class="gs">1332</span></div>
<div class="g" style="left:277px;top:276px;"><span class="gs">Thuế GTGT được khấu trừ của tài sản cố định</span></div>
<div class="cl" style="left:30px;top:291px;width:120px;background:#FCF4E4"></div>
<div class="cl" style="left:150px;top:291px;width:35px;background:#FCF4E4"></div>
<div class="cl" style="left:185px;top:291px;width:39px;background:#FCF4E4"></div>
<div class="cl" style="left:224px;top:291px;width:51px;background:#FCF4E4"></div>
<div class="cl" style="left:275px;top:291px;width:206px;background:#FCF4E4"></div>
<div class="cl" style="left:481px;top:291px;width:74px;background:#FFFFFF"></div>
<div class="cl" style="left:555px;top:291px;width:70px;background:#FCF4E4"></div>
<div class="cl" style="left:625px;top:291px;width:68px;background:#FFFFFF"></div>
<div class="cl" style="left:693px;top:291px;width:68px;background:#FCF4E4"></div>
<div class="cl" style="left:761px;top:291px;width:70px;background:#FFFFFF"></div>
<div class="cl" style="left:831px;top:291px;width:64px;background:#FFFFFF"></div>
<div class="cl" style="left:895px;top:291px;width:70px;background:#FFFFFF"></div>
<div class="cl" style="left:965px;top:291px;width:70px;background:#FFFFFF"></div>
<div class="cl" style="left:1035px;top:291px;width:81px;background:#FCF4E4"></div>
<div class="cl" style="left:1116px;top:291px;width:81px;background:#FCF4E4"></div>
<div class="a" style="left:0px;top:291px;width:30px;height:16px;background:#DFE8F4;border-bottom:1px solid #C7D4E4;border-right:1px solid #B4C6DE"></div>
<div class="g gc" style="left:1px;top:293px;width:29px;text-align:center"><span class="gs">15</span></div>
<div class="g" style="left:31px;top:290px;"><span class="gs">21 - Ngân sách Tỉnh tự chủ</span></div>
<div class="g" style="left:151px;top:290px;"><span class="gs">070</span></div>
<div class="g" style="left:186px;top:290px;"><span class="gs">072</span></div>
<div class="g" style="left:226px;top:292px;"><span class="gs">136</span></div>
<div class="g" style="left:277px;top:292px;"><span class="gs">Phải thu nội bộ</span></div>
<div class="cl" style="left:30px;top:307px;width:120px;background:#FCF4E4"></div>
<div class="cl" style="left:150px;top:307px;width:35px;background:#FCF4E4"></div>
<div class="cl" style="left:185px;top:307px;width:39px;background:#FCF4E4"></div>
<div class="cl" style="left:224px;top:307px;width:51px;background:#FCF4E4"></div>
<div class="cl" style="left:275px;top:307px;width:206px;background:#FCF4E4"></div>
<div class="cl" style="left:481px;top:307px;width:74px;background:#FCF4E4"></div>
<div class="cl" style="left:555px;top:307px;width:70px;background:#FCF4E4"></div>
<div class="cl" style="left:625px;top:307px;width:68px;background:#FCF4E4"></div>
<div class="cl" style="left:693px;top:307px;width:68px;background:#FCF4E4"></div>
<div class="cl" style="left:761px;top:307px;width:70px;background:#FCF4E4"></div>
<div class="cl" style="left:831px;top:307px;width:64px;background:#FCF4E4"></div>
<div class="cl" style="left:895px;top:307px;width:70px;background:#FCF4E4"></div>
<div class="cl" style="left:965px;top:307px;width:70px;background:#FCF4E4"></div>
<div class="cl" style="left:1035px;top:307px;width:81px;background:#FCF4E4"></div>
<div class="cl" style="left:1116px;top:307px;width:81px;background:#FCF4E4"></div>
<div class="a" style="left:0px;top:307px;width:30px;height:16px;background:#DFE8F4;border-bottom:1px solid #C7D4E4;border-right:1px solid #B4C6DE"></div>
<div class="g gc" style="left:1px;top:309px;width:29px;text-align:center"><span class="gs">16</span></div>
<div class="g" style="left:31px;top:306px;"><span class="gs">21 - Ngân sách Tỉnh tự chủ</span></div>
<div class="g" style="left:151px;top:306px;"><span class="gs">070</span></div>
<div class="g" style="left:186px;top:306px;"><span class="gs">072</span></div>
<div class="g" style="left:226px;top:308px;"><span class="gs">137</span></div>
<div class="g" style="left:277px;top:308px;"><span class="gs">Tạm chi</span></div>
<div class="cl" style="left:30px;top:323px;width:120px;background:#FCF4E4"></div>
<div class="cl" style="left:150px;top:323px;width:35px;background:#FCF4E4"></div>
<div class="cl" style="left:185px;top:323px;width:39px;background:#FCF4E4"></div>
<div class="cl" style="left:224px;top:323px;width:51px;background:#FCF4E4"></div>
<div class="cl" style="left:275px;top:323px;width:206px;background:#FCF4E4"></div>
<div class="cl" style="left:481px;top:323px;width:74px;background:#FFFFFF"></div>
<div class="cl" style="left:555px;top:323px;width:70px;background:#FCF4E4"></div>
<div class="cl" style="left:625px;top:323px;width:68px;background:#FFFFFF"></div>
<div class="cl" style="left:693px;top:323px;width:68px;background:#FCF4E4"></div>
<div class="cl" style="left:761px;top:323px;width:70px;background:#FFFFFF"></div>
<div class="cl" style="left:831px;top:323px;width:64px;background:#FFFFFF"></div>
<div class="cl" style="left:895px;top:323px;width:70px;background:#FFFFFF"></div>
<div class="cl" style="left:965px;top:323px;width:70px;background:#FFFFFF"></div>
<div class="cl" style="left:1035px;top:323px;width:81px;background:#FCF4E4"></div>
<div class="cl" style="left:1116px;top:323px;width:81px;background:#FCF4E4"></div>
<div class="a" style="left:0px;top:323px;width:30px;height:16px;background:#DFE8F4;border-bottom:1px solid #C7D4E4;border-right:1px solid #B4C6DE"></div>
<div class="g gc" style="left:1px;top:325px;width:29px;text-align:center"><span class="gs">17</span></div>
<div class="g" style="left:31px;top:322px;"><span class="gs">21 - Ngân sách Tỉnh tự chủ</span></div>
<div class="g" style="left:151px;top:322px;"><span class="gs">070</span></div>
<div class="g" style="left:186px;top:322px;"><span class="gs">072</span></div>
<div class="g" style="left:226px;top:324px;"><span class="gs">1371</span></div>
<div class="g" style="left:277px;top:324px;"><span class="gs">Tạm chi bổ sung thu nhập</span></div>
<div class="cl" style="left:30px;top:339px;width:120px;background:#FCF4E4"></div>
<div class="cl" style="left:150px;top:339px;width:35px;background:#FCF4E4"></div>
<div class="cl" style="left:185px;top:339px;width:39px;background:#FCF4E4"></div>
<div class="cl" style="left:224px;top:339px;width:51px;background:#FCF4E4"></div>
<div class="cl" style="left:275px;top:339px;width:206px;background:#FCF4E4"></div>
<div class="cl" style="left:481px;top:339px;width:74px;background:#FFFFFF"></div>
<div class="cl" style="left:555px;top:339px;width:70px;background:#FCF4E4"></div>
<div class="cl" style="left:625px;top:339px;width:68px;background:#FFFFFF"></div>
<div class="cl" style="left:693px;top:339px;width:68px;background:#FCF4E4"></div>
<div class="cl" style="left:761px;top:339px;width:70px;background:#FFFFFF"></div>
<div class="cl" style="left:831px;top:339px;width:64px;background:#FFFFFF"></div>
<div class="cl" style="left:895px;top:339px;width:70px;background:#FFFFFF"></div>
<div class="cl" style="left:965px;top:339px;width:70px;background:#FFFFFF"></div>
<div class="cl" style="left:1035px;top:339px;width:81px;background:#FCF4E4"></div>
<div class="cl" style="left:1116px;top:339px;width:81px;background:#FCF4E4"></div>
<div class="a" style="left:0px;top:339px;width:30px;height:16px;background:#DFE8F4;border-bottom:1px solid #C7D4E4;border-right:1px solid #B4C6DE"></div>
<div class="g gc" style="left:1px;top:341px;width:29px;text-align:center"><span class="gs">18</span></div>
<div class="g" style="left:31px;top:338px;"><span class="gs">21 - Ngân sách Tỉnh tự chủ</span></div>
<div class="g" style="left:151px;top:338px;"><span class="gs">070</span></div>
<div class="g" style="left:186px;top:338px;"><span class="gs">072</span></div>
<div class="g" style="left:226px;top:340px;"><span class="gs">1374</span></div>
<div class="g" style="left:277px;top:340px;"><span class="gs">Tạm chi từ dự toán ứng trước</span></div>
<div class="cl" style="left:30px;top:355px;width:120px;background:#FCF4E4"></div>
<div class="cl" style="left:150px;top:355px;width:35px;background:#FCF4E4"></div>
<div class="cl" style="left:185px;top:355px;width:39px;background:#FCF4E4"></div>
<div class="cl" style="left:224px;top:355px;width:51px;background:#FCF4E4"></div>
<div class="cl" style="left:275px;top:355px;width:206px;background:#FCF4E4"></div>
<div class="cl" style="left:481px;top:355px;width:74px;background:#FFFFFF"></div>
<div class="cl" style="left:555px;top:355px;width:70px;background:#FCF4E4"></div>
<div class="cl" style="left:625px;top:355px;width:68px;background:#FFFFFF"></div>
<div class="cl" style="left:693px;top:355px;width:68px;background:#FCF4E4"></div>
<div class="cl" style="left:761px;top:355px;width:70px;background:#FFFFFF"></div>
<div class="cl" style="left:831px;top:355px;width:64px;background:#FFFFFF"></div>
<div class="cl" style="left:895px;top:355px;width:70px;background:#FFFFFF"></div>
<div class="cl" style="left:965px;top:355px;width:70px;background:#FFFFFF"></div>
<div class="cl" style="left:1035px;top:355px;width:81px;background:#FCF4E4"></div>
<div class="cl" style="left:1116px;top:355px;width:81px;background:#FCF4E4"></div>
<div class="a" style="left:0px;top:355px;width:30px;height:16px;background:#DFE8F4;border-bottom:1px solid #C7D4E4;border-right:1px solid #B4C6DE"></div>
<div class="g gc" style="left:1px;top:357px;width:29px;text-align:center"><span class="gs">19</span></div>
<div class="g" style="left:31px;top:354px;"><span class="gs">21 - Ngân sách Tỉnh tự chủ</span></div>
<div class="g" style="left:151px;top:354px;"><span class="gs">070</span></div>
<div class="g" style="left:186px;top:354px;"><span class="gs">072</span></div>
<div class="g" style="left:226px;top:356px;"><span class="gs">1378</span></div>
<div class="g" style="left:277px;top:356px;"><span class="gs">Tạm chi khác</span></div>
<div class="cl" style="left:30px;top:371px;width:120px;background:#FCF4E4"></div>
<div class="cl" style="left:150px;top:371px;width:35px;background:#FCF4E4"></div>
<div class="cl" style="left:185px;top:371px;width:39px;background:#FCF4E4"></div>
<div class="cl" style="left:224px;top:371px;width:51px;background:#FCF4E4"></div>
<div class="cl" style="left:275px;top:371px;width:206px;background:#FCF4E4"></div>
<div class="cl" style="left:481px;top:371px;width:74px;background:#FCF4E4"></div>
<div class="cl" style="left:555px;top:371px;width:70px;background:#FCF4E4"></div>
<div class="cl" style="left:625px;top:371px;width:68px;background:#FCF4E4"></div>
<div class="cl" style="left:693px;top:371px;width:68px;background:#FCF4E4"></div>
<div class="cl" style="left:761px;top:371px;width:70px;background:#FCF4E4"></div>
<div class="cl" style="left:831px;top:371px;width:64px;background:#FCF4E4"></div>
<div class="cl" style="left:895px;top:371px;width:70px;background:#FCF4E4"></div>
<div class="cl" style="left:965px;top:371px;width:70px;background:#FCF4E4"></div>
<div class="cl" style="left:1035px;top:371px;width:81px;background:#FFFFFF"></div>
<div class="cl" style="left:1116px;top:371px;width:81px;background:#FFFFFF"></div>
<div class="a" style="left:0px;top:371px;width:30px;height:16px;background:#DFE8F4;border-bottom:1px solid #C7D4E4;border-right:1px solid #B4C6DE"></div>
<div class="g gc" style="left:1px;top:373px;width:29px;text-align:center"><span class="gs">20</span></div>
<div class="g" style="left:31px;top:370px;"><span class="gs">21 - Ngân sách Tỉnh tự chủ</span></div>
<div class="g" style="left:151px;top:370px;"><span class="gs">070</span></div>
<div class="g" style="left:186px;top:370px;"><span class="gs">072</span></div>
<div class="g" style="left:226px;top:372px;"><span class="gs">138</span></div>
<div class="g" style="left:277px;top:372px;"><span class="gs">Phải thu khác</span></div>
<div class="cl" style="left:30px;top:387px;width:120px;background:#FCF4E4"></div>
<div class="cl" style="left:150px;top:387px;width:35px;background:#FCF4E4"></div>
<div class="cl" style="left:185px;top:387px;width:39px;background:#FCF4E4"></div>
<div class="cl" style="left:224px;top:387px;width:51px;background:#FCF4E4"></div>
<div class="cl" style="left:275px;top:387px;width:206px;background:#FCF4E4"></div>
<div class="cl" style="left:481px;top:387px;width:74px;background:#FFFFFF"></div>
<div class="cl" style="left:555px;top:387px;width:70px;background:#FFFFFF"></div>
<div class="cl" style="left:625px;top:387px;width:68px;background:#FFFFFF"></div>
<div class="cl" style="left:693px;top:387px;width:68px;background:#FFFFFF"></div>
<div class="cl" style="left:761px;top:387px;width:70px;background:#FFFFFF"></div>
<div class="cl" style="left:831px;top:387px;width:64px;background:#FFFFFF"></div>
<div class="cl" style="left:895px;top:387px;width:70px;background:#FFFFFF"></div>
<div class="cl" style="left:965px;top:387px;width:70px;background:#FFFFFF"></div>
<div class="cl" style="left:1035px;top:387px;width:81px;background:#FFFFFF"></div>
<div class="cl" style="left:1116px;top:387px;width:81px;background:#FFFFFF"></div>
<div class="a" style="left:0px;top:387px;width:30px;height:16px;background:#DFE8F4;border-bottom:1px solid #C7D4E4;border-right:1px solid #B4C6DE"></div>
<div class="g gc" style="left:1px;top:389px;width:29px;text-align:center"><span class="gs">21</span></div>
<div class="g" style="left:31px;top:386px;"><span class="gs">21 - Ngân sách Tỉnh tự chủ</span></div>
<div class="g" style="left:151px;top:386px;"><span class="gs">070</span></div>
<div class="g" style="left:186px;top:386px;"><span class="gs">072</span></div>
<div class="g" style="left:226px;top:388px;"><span class="gs">1381</span></div>
<div class="g" style="left:277px;top:388px;"><span class="gs">Phải thu tiền lãi</span></div>
<div class="cl" style="left:30px;top:403px;width:120px;background:#FCF4E4"></div>
<div class="cl" style="left:150px;top:403px;width:35px;background:#FCF4E4"></div>
<div class="cl" style="left:185px;top:403px;width:39px;background:#FCF4E4"></div>
<div class="cl" style="left:224px;top:403px;width:51px;background:#FCF4E4"></div>
<div class="cl" style="left:275px;top:403px;width:206px;background:#FCF4E4"></div>
<div class="cl" style="left:481px;top:403px;width:74px;background:#FFFFFF"></div>
<div class="cl" style="left:555px;top:403px;width:70px;background:#FFFFFF"></div>
<div class="cl" style="left:625px;top:403px;width:68px;background:#FFFFFF"></div>
<div class="cl" style="left:693px;top:403px;width:68px;background:#FFFFFF"></div>
<div class="cl" style="left:761px;top:403px;width:70px;background:#FFFFFF"></div>
<div class="cl" style="left:831px;top:403px;width:64px;background:#FFFFFF"></div>
<div class="cl" style="left:895px;top:403px;width:70px;background:#FFFFFF"></div>
<div class="cl" style="left:965px;top:403px;width:70px;background:#FFFFFF"></div>
<div class="cl" style="left:1035px;top:403px;width:81px;background:#FFFFFF"></div>
<div class="cl" style="left:1116px;top:403px;width:81px;background:#FFFFFF"></div>
<div class="a" style="left:0px;top:403px;width:30px;height:16px;background:#DFE8F4;border-bottom:1px solid #C7D4E4;border-right:1px solid #B4C6DE"></div>
<div class="g gc" style="left:1px;top:405px;width:29px;text-align:center"><span class="gs">22</span></div>
<div class="g" style="left:31px;top:402px;"><span class="gs">21 - Ngân sách Tỉnh tự chủ</span></div>
<div class="g" style="left:151px;top:402px;"><span class="gs">070</span></div>
<div class="g" style="left:186px;top:402px;"><span class="gs">072</span></div>
<div class="g" style="left:226px;top:404px;"><span class="gs">1382</span></div>
<div class="g" style="left:277px;top:404px;"><span class="gs">Phải thu cổ tức/lợi nhuận</span></div>
<div class="cl" style="left:30px;top:419px;width:120px;background:#FCF4E4"></div>
<div class="cl" style="left:150px;top:419px;width:35px;background:#FCF4E4"></div>
<div class="cl" style="left:185px;top:419px;width:39px;background:#FCF4E4"></div>
<div class="cl" style="left:224px;top:419px;width:51px;background:#FCF4E4"></div>
<div class="cl" style="left:275px;top:419px;width:206px;background:#FCF4E4"></div>
<div class="cl" style="left:481px;top:419px;width:74px;background:#FFFFFF"></div>
<div class="cl" style="left:555px;top:419px;width:70px;background:#FFFFFF"></div>
<div class="cl" style="left:625px;top:419px;width:68px;background:#FFFFFF"></div>
<div class="cl" style="left:693px;top:419px;width:68px;background:#FFFFFF"></div>
<div class="cl" style="left:761px;top:419px;width:70px;background:#FFFFFF"></div>
<div class="cl" style="left:831px;top:419px;width:64px;background:#FFFFFF"></div>
<div class="cl" style="left:895px;top:419px;width:70px;background:#FFFFFF"></div>
<div class="cl" style="left:965px;top:419px;width:70px;background:#FFFFFF"></div>
<div class="cl" style="left:1035px;top:419px;width:81px;background:#FFFFFF"></div>
<div class="cl" style="left:1116px;top:419px;width:81px;background:#FFFFFF"></div>
<div class="a" style="left:0px;top:419px;width:30px;height:16px;background:#DFE8F4;border-bottom:1px solid #C7D4E4;border-right:1px solid #B4C6DE"></div>
<div class="g gc" style="left:1px;top:421px;width:29px;text-align:center"><span class="gs">23</span></div>
<div class="g" style="left:31px;top:418px;"><span class="gs">21 - Ngân sách Tỉnh tự chủ</span></div>
<div class="g" style="left:151px;top:418px;"><span class="gs">070</span></div>
<div class="g" style="left:186px;top:418px;"><span class="gs">072</span></div>
<div class="g" style="left:226px;top:420px;"><span class="gs">1383</span></div>
<div class="g" style="left:277px;top:420px;"><span class="gs">Phải thu các khoản phí và lệ phí</span></div>
<div class="cl" style="left:30px;top:435px;width:120px;background:#FCF4E4"></div>
<div class="cl" style="left:150px;top:435px;width:35px;background:#FCF4E4"></div>
<div class="cl" style="left:185px;top:435px;width:39px;background:#FCF4E4"></div>
<div class="cl" style="left:224px;top:435px;width:51px;background:#FCF4E4"></div>
<div class="cl" style="left:275px;top:435px;width:206px;background:#FCF4E4"></div>
<div class="cl" style="left:481px;top:435px;width:74px;background:#FFFFFF"></div>
<div class="cl" style="left:555px;top:435px;width:70px;background:#FFFFFF"></div>
<div class="cl" style="left:625px;top:435px;width:68px;background:#FFFFFF"></div>
<div class="cl" style="left:693px;top:435px;width:68px;background:#FFFFFF"></div>
<div class="cl" style="left:761px;top:435px;width:70px;background:#FFFFFF"></div>
<div class="cl" style="left:831px;top:435px;width:64px;background:#FFFFFF"></div>
<div class="cl" style="left:895px;top:435px;width:70px;background:#FFFFFF"></div>
<div class="cl" style="left:965px;top:435px;width:70px;background:#FFFFFF"></div>
<div class="cl" style="left:1035px;top:435px;width:81px;background:#FFFFFF"></div>
<div class="cl" style="left:1116px;top:435px;width:81px;background:#FFFFFF"></div>
<div class="a" style="left:0px;top:435px;width:30px;height:16px;background:#DFE8F4;border-bottom:1px solid #C7D4E4;border-right:1px solid #B4C6DE"></div>
<div class="g gc" style="left:1px;top:437px;width:29px;text-align:center"><span class="gs">24</span></div>
<div class="g" style="left:31px;top:434px;"><span class="gs">21 - Ngân sách Tỉnh tự chủ</span></div>
<div class="g" style="left:151px;top:434px;"><span class="gs">070</span></div>
<div class="g" style="left:186px;top:434px;"><span class="gs">072</span></div>
<div class="g" style="left:226px;top:436px;"><span class="gs">1388</span></div>
<div class="g" style="left:277px;top:436px;"><span class="gs">Phải thu khác</span></div>
<div class="cl" style="left:30px;top:451px;width:120px;background:#FCF4E4"></div>
<div class="cl" style="left:150px;top:451px;width:35px;background:#FCF4E4"></div>
<div class="cl" style="left:185px;top:451px;width:39px;background:#FCF4E4"></div>
<div class="cl" style="left:224px;top:451px;width:51px;background:#FCF4E4"></div>
<div class="cl" style="left:275px;top:451px;width:206px;background:#FCF4E4"></div>
<div class="cl" style="left:481px;top:451px;width:74px;background:#FFFFFF"></div>
<div class="cl" style="left:555px;top:451px;width:70px;background:#FCF4E4"></div>
<div class="cl" style="left:625px;top:451px;width:68px;background:#FFFFFF"></div>
<div class="cl" style="left:693px;top:451px;width:68px;background:#FCF4E4"></div>
<div class="cl" style="left:761px;top:451px;width:70px;background:#FFFFFF"></div>
<div class="cl" style="left:831px;top:451px;width:64px;background:#FFFFFF"></div>
<div class="cl" style="left:895px;top:451px;width:70px;background:#FFFFFF"></div>
<div class="cl" style="left:965px;top:451px;width:70px;background:#FFFFFF"></div>
<div class="cl" style="left:1035px;top:451px;width:81px;background:#FCF4E4"></div>
<div class="cl" style="left:1116px;top:451px;width:81px;background:#FCF4E4"></div>
<div class="a" style="left:0px;top:451px;width:30px;height:16px;background:#DFE8F4;border-bottom:1px solid #C7D4E4;border-right:1px solid #B4C6DE"></div>
<div class="g gc" style="left:1px;top:453px;width:29px;text-align:center"><span class="gs">25</span></div>
<div class="g" style="left:31px;top:450px;"><span class="gs">21 - Ngân sách Tỉnh tự chủ</span></div>
<div class="g" style="left:151px;top:450px;"><span class="gs">070</span></div>
<div class="g" style="left:186px;top:450px;"><span class="gs">072</span></div>
<div class="a" style="left:1114px;top:241px;width:80px;height:18px;border:2px solid #000"></div>
<div class="a" style="left:0px;top:0px;width:30px;height:67px;background:#ADC5E7;border-right:1px solid #C3D2E6;border-bottom:1px solid #9DB4D6"></div>
<svg class="a" style="left:18px;top:56px" width="9" height="9"><path d="M9 0 L9 9 L0 9 Z" fill="#E6EDF7"/></svg>
<div class="hd" style="left:30px;top:0px;width:120px;height:51px;background:linear-gradient(#FBFCFD,#D8E0EB);border-bottom-color:#B4C8E0"></div>
<div class="g gc" style="left:30px;top:20px;width:120px;text-align:center;color:#2a2a34"><span class="gs">Nguồn</span></div>
<div class="hd" style="left:150px;top:0px;width:35px;height:51px;background:linear-gradient(#FBFCFD,#D8E0EB);border-bottom-color:#B4C8E0"></div>
<div class="g gc" style="left:150px;top:20px;width:35px;text-align:center;color:#2a2a34"><span class="gs">Loại</span></div>
<div class="hd" style="left:185px;top:0px;width:39px;height:51px;background:linear-gradient(#FBFCFD,#D8E0EB);border-bottom-color:#B4C8E0"></div>
<div class="g gc" style="left:185px;top:20px;width:39px;text-align:center;color:#2a2a34"><span class="gs">Khoản</span></div>
<div class="hd" style="left:224px;top:0px;width:51px;height:51px;background:linear-gradient(#FBFCFD,#D8E0EB);border-bottom-color:#B4C8E0"></div>
<div class="g gc" style="left:224px;top:20px;width:51px;text-align:center;color:#2a2a34"><span class="gs">Số hiệu TK</span></div>
<div class="hd" style="left:275px;top:0px;width:206px;height:51px;background:linear-gradient(#FBFCFD,#D8E0EB);border-bottom-color:#B4C8E0"></div>
<div class="g gc" style="left:275px;top:20px;width:206px;text-align:center;color:#2a2a34"><span class="gs">Tên tài khoản</span></div>
<div class="hd" style="left:481px;top:0px;width:144px;height:35px;background:linear-gradient(#FBFCFD,#D8E0EB);border-bottom-color:#B4C8E0"></div>
<div class="g gc" style="left:481px;top:12px;width:144px;text-align:center;color:#2a2a34"><span class="gs">Số dư đầu kỳ</span></div>
<div class="hd" style="left:625px;top:0px;width:136px;height:35px;background:linear-gradient(#FBFCFD,#D8E0EB);border-bottom-color:#B4C8E0"></div>
<div class="g gc" style="left:625px;top:12px;width:136px;text-align:center;color:#2a2a34"><span class="gs">Điều chỉnh số dư đầu năm</span></div>
<div class="hd" style="left:761px;top:0px;width:274px;height:19px;background:linear-gradient(#FBFCFD,#D8E0EB);border-bottom-color:#B4C8E0"></div>
<div class="g gc" style="left:761px;top:4px;width:274px;text-align:center;color:#2a2a34"><span class="gs">Số phát sinh</span></div>
<div class="hd" style="left:761px;top:19px;width:134px;height:16px;background:linear-gradient(#FBFCFD,#D8E0EB);border-bottom-color:#B4C8E0"></div>
<div class="g gc" style="left:761px;top:21px;width:134px;text-align:center;color:#2a2a34"><span class="gs">Kỳ này</span></div>
<div class="hd" style="left:895px;top:19px;width:140px;height:16px;background:linear-gradient(#FBFCFD,#D8E0EB);border-bottom-color:#B4C8E0"></div>
<div class="g gc" style="left:895px;top:21px;width:140px;text-align:center;color:#2a2a34"><span class="gs">Lũy kế đầu năm</span></div>
<div class="hd" style="left:1035px;top:0px;width:162px;height:35px;background:linear-gradient(#FBFCFD,#D8E0EB);border-bottom-color:#B4C8E0"></div>
<div class="g gc" style="left:1034px;top:12px;width:162px;text-align:center;color:#2a2a34"><span class="gs">Số dư cuối kỳ</span></div>
<div class="hd" style="left:481px;top:35px;width:74px;height:16px;background:linear-gradient(#FBFCFD,#D8E0EB);border-bottom-color:#B4C8E0"></div>
<div class="g gc" style="left:481px;top:37px;width:74px;text-align:center;color:#2a2a34"><span class="gs">Nợ</span></div>
<div class="hd" style="left:555px;top:35px;width:70px;height:16px;background:linear-gradient(#FBFCFD,#D8E0EB);border-bottom-color:#B4C8E0"></div>
<div class="g gc" style="left:555px;top:37px;width:70px;text-align:center;color:#2a2a34"><span class="gs">Có</span></div>
<div class="hd" style="left:625px;top:35px;width:68px;height:16px;background:linear-gradient(#FBFCFD,#D8E0EB);border-bottom-color:#B4C8E0"></div>
<div class="g gc" style="left:625px;top:37px;width:68px;text-align:center;color:#2a2a34"><span class="gs">Nợ</span></div>
<div class="hd" style="left:693px;top:35px;width:68px;height:16px;background:linear-gradient(#FBFCFD,#D8E0EB);border-bottom-color:#B4C8E0"></div>
<div class="g gc" style="left:693px;top:37px;width:68px;text-align:center;color:#2a2a34"><span class="gs">Có</span></div>
<div class="hd" style="left:761px;top:35px;width:70px;height:16px;background:linear-gradient(#FBFCFD,#D8E0EB);border-bottom-color:#B4C8E0"></div>
<div class="g gc" style="left:761px;top:37px;width:70px;text-align:center;color:#2a2a34"><span class="gs">Nợ</span></div>
<div class="hd" style="left:831px;top:35px;width:64px;height:16px;background:linear-gradient(#FBFCFD,#D8E0EB);border-bottom-color:#B4C8E0"></div>
<div class="g gc" style="left:831px;top:37px;width:64px;text-align:center;color:#2a2a34"><span class="gs">Có</span></div>
<div class="hd" style="left:895px;top:35px;width:70px;height:16px;background:linear-gradient(#FBFCFD,#D8E0EB);border-bottom-color:#B4C8E0"></div>
<div class="g gc" style="left:895px;top:37px;width:70px;text-align:center;color:#2a2a34"><span class="gs">Nợ</span></div>
<div class="hd" style="left:965px;top:35px;width:70px;height:16px;background:linear-gradient(#FBFCFD,#D8E0EB);border-bottom-color:#B4C8E0"></div>
<div class="g gc" style="left:965px;top:37px;width:70px;text-align:center;color:#2a2a34"><span class="gs">Có</span></div>
<div class="hd" style="left:1035px;top:35px;width:81px;height:16px;background:linear-gradient(#FBFCFD,#D8E0EB);border-bottom-color:#B4C8E0"></div>
<div class="g gc" style="left:1035px;top:37px;width:81px;text-align:center;color:#2a2a34"><span class="gs">Nợ</span></div>
<div class="hd" style="left:1116px;top:35px;width:81px;height:16px;background:linear-gradient(#FFF0D2,#F7BF74);border-bottom-color:#F2A448"></div>
<div class="g gc" style="left:1115px;top:37px;width:81px;text-align:center;color:#2a2a34"><span class="gs">Có</span></div>
<div class="hd" style="left:30px;top:51px;width:120px;height:16px;background:linear-gradient(#FBFCFD,#D8E0EB);border-bottom-color:#B4C8E0"></div>
<div class="g gc" style="left:24px;top:53px;width:120px;text-align:center;color:#2a2a34"><span class="gs">A</span></div>
<svg class="filt" style="left:137px;top:52px;width:12px;height:10px" viewBox="0 0 12 10"><path d="M0.8 1 H11.2" stroke="#c4c4c4" stroke-width="1"/><path d="M0.8 1 L4.6 5.2 V9" fill="none" stroke="#8c8c8c" stroke-width="1.1"/><path d="M11.2 1 L7.4 5.2 V9" fill="none" stroke="#333" stroke-width="1.2"/><rect x="4.6" y="5.2" width="2.8" height="3.8" fill="#555"/><rect x="4.3" y="7.8" width="3.4" height="1.4" fill="#111"/></svg>
<div class="hd" style="left:150px;top:51px;width:35px;height:16px;background:linear-gradient(#FBFCFD,#D8E0EB);border-bottom-color:#B4C8E0"></div>
<div class="g gc" style="left:144px;top:53px;width:35px;text-align:center;color:#2a2a34"><span class="gs">B</span></div>
<svg class="filt" style="left:172px;top:52px;width:12px;height:10px" viewBox="0 0 12 10"><path d="M0.8 1 H11.2" stroke="#c4c4c4" stroke-width="1"/><path d="M0.8 1 L4.6 5.2 V9" fill="none" stroke="#8c8c8c" stroke-width="1.1"/><path d="M11.2 1 L7.4 5.2 V9" fill="none" stroke="#333" stroke-width="1.2"/><rect x="4.6" y="5.2" width="2.8" height="3.8" fill="#555"/><rect x="4.3" y="7.8" width="3.4" height="1.4" fill="#111"/></svg>
<div class="hd" style="left:185px;top:51px;width:39px;height:16px;background:linear-gradient(#FBFCFD,#D8E0EB);border-bottom-color:#B4C8E0"></div>
<div class="g gc" style="left:179px;top:53px;width:39px;text-align:center;color:#2a2a34"><span class="gs">C</span></div>
<svg class="filt" style="left:211px;top:52px;width:12px;height:10px" viewBox="0 0 12 10"><path d="M0.8 1 H11.2" stroke="#c4c4c4" stroke-width="1"/><path d="M0.8 1 L4.6 5.2 V9" fill="none" stroke="#8c8c8c" stroke-width="1.1"/><path d="M11.2 1 L7.4 5.2 V9" fill="none" stroke="#333" stroke-width="1.2"/><rect x="4.6" y="5.2" width="2.8" height="3.8" fill="#555"/><rect x="4.3" y="7.8" width="3.4" height="1.4" fill="#111"/></svg>
<div class="hd" style="left:224px;top:51px;width:51px;height:16px;background:linear-gradient(#FBFCFD,#D8E0EB);border-bottom-color:#B4C8E0"></div>
<div class="g gc" style="left:218px;top:53px;width:51px;text-align:center;color:#2a2a34"><span class="gs">D</span></div>
<svg class="filt" style="left:262px;top:52px;width:12px;height:10px" viewBox="0 0 12 10"><path d="M0.8 1 H11.2" stroke="#c4c4c4" stroke-width="1"/><path d="M0.8 1 L4.6 5.2 V9" fill="none" stroke="#8c8c8c" stroke-width="1.1"/><path d="M11.2 1 L7.4 5.2 V9" fill="none" stroke="#333" stroke-width="1.2"/><rect x="4.6" y="5.2" width="2.8" height="3.8" fill="#555"/><rect x="4.3" y="7.8" width="3.4" height="1.4" fill="#111"/></svg>
<div class="hd" style="left:275px;top:51px;width:206px;height:16px;background:linear-gradient(#FBFCFD,#D8E0EB);border-bottom-color:#B4C8E0"></div>
<div class="g gc" style="left:269px;top:53px;width:206px;text-align:center;color:#2a2a34"><span class="gs">E</span></div>
<svg class="filt" style="left:468px;top:52px;width:12px;height:10px" viewBox="0 0 12 10"><path d="M0.8 1 H11.2" stroke="#c4c4c4" stroke-width="1"/><path d="M0.8 1 L4.6 5.2 V9" fill="none" stroke="#8c8c8c" stroke-width="1.1"/><path d="M11.2 1 L7.4 5.2 V9" fill="none" stroke="#333" stroke-width="1.2"/><rect x="4.6" y="5.2" width="2.8" height="3.8" fill="#555"/><rect x="4.3" y="7.8" width="3.4" height="1.4" fill="#111"/></svg>
<div class="hd" style="left:481px;top:51px;width:74px;height:16px;background:linear-gradient(#FBFCFD,#D8E0EB);border-bottom-color:#B4C8E0"></div>
<div class="g gc" style="left:475px;top:53px;width:74px;text-align:center;color:#2a2a34"><span class="gs">F</span></div>
<svg class="filt" style="left:542px;top:52px;width:12px;height:10px" viewBox="0 0 12 10"><path d="M0.8 1 H11.2" stroke="#c4c4c4" stroke-width="1"/><path d="M0.8 1 L4.6 5.2 V9" fill="none" stroke="#8c8c8c" stroke-width="1.1"/><path d="M11.2 1 L7.4 5.2 V9" fill="none" stroke="#333" stroke-width="1.2"/><rect x="4.6" y="5.2" width="2.8" height="3.8" fill="#555"/><rect x="4.3" y="7.8" width="3.4" height="1.4" fill="#111"/></svg>
<div class="hd" style="left:555px;top:51px;width:70px;height:16px;background:linear-gradient(#FBFCFD,#D8E0EB);border-bottom-color:#B4C8E0"></div>
<div class="g gc" style="left:549px;top:53px;width:70px;text-align:center;color:#2a2a34"><span class="gs">G</span></div>
<svg class="filt" style="left:612px;top:52px;width:12px;height:10px" viewBox="0 0 12 10"><path d="M0.8 1 H11.2" stroke="#c4c4c4" stroke-width="1"/><path d="M0.8 1 L4.6 5.2 V9" fill="none" stroke="#8c8c8c" stroke-width="1.1"/><path d="M11.2 1 L7.4 5.2 V9" fill="none" stroke="#333" stroke-width="1.2"/><rect x="4.6" y="5.2" width="2.8" height="3.8" fill="#555"/><rect x="4.3" y="7.8" width="3.4" height="1.4" fill="#111"/></svg>
<div class="hd" style="left:625px;top:51px;width:68px;height:16px;background:linear-gradient(#FBFCFD,#D8E0EB);border-bottom-color:#B4C8E0"></div>
<div class="g gc" style="left:619px;top:53px;width:68px;text-align:center;color:#2a2a34"><span class="gs">H</span></div>
<svg class="filt" style="left:680px;top:52px;width:12px;height:10px" viewBox="0 0 12 10"><path d="M0.8 1 H11.2" stroke="#c4c4c4" stroke-width="1"/><path d="M0.8 1 L4.6 5.2 V9" fill="none" stroke="#8c8c8c" stroke-width="1.1"/><path d="M11.2 1 L7.4 5.2 V9" fill="none" stroke="#333" stroke-width="1.2"/><rect x="4.6" y="5.2" width="2.8" height="3.8" fill="#555"/><rect x="4.3" y="7.8" width="3.4" height="1.4" fill="#111"/></svg>
<div class="hd" style="left:693px;top:51px;width:68px;height:16px;background:linear-gradient(#FBFCFD,#D8E0EB);border-bottom-color:#B4C8E0"></div>
<div class="g gc" style="left:687px;top:53px;width:68px;text-align:center;color:#2a2a34"><span class="gs">I</span></div>
<svg class="filt" style="left:748px;top:52px;width:12px;height:10px" viewBox="0 0 12 10"><path d="M0.8 1 H11.2" stroke="#c4c4c4" stroke-width="1"/><path d="M0.8 1 L4.6 5.2 V9" fill="none" stroke="#8c8c8c" stroke-width="1.1"/><path d="M11.2 1 L7.4 5.2 V9" fill="none" stroke="#333" stroke-width="1.2"/><rect x="4.6" y="5.2" width="2.8" height="3.8" fill="#555"/><rect x="4.3" y="7.8" width="3.4" height="1.4" fill="#111"/></svg>
<div class="hd" style="left:761px;top:51px;width:70px;height:16px;background:linear-gradient(#FBFCFD,#D8E0EB);border-bottom-color:#B4C8E0"></div>
<div class="g gc" style="left:755px;top:53px;width:70px;text-align:center;color:#2a2a34"><span class="gs">J</span></div>
<svg class="filt" style="left:818px;top:52px;width:12px;height:10px" viewBox="0 0 12 10"><path d="M0.8 1 H11.2" stroke="#c4c4c4" stroke-width="1"/><path d="M0.8 1 L4.6 5.2 V9" fill="none" stroke="#8c8c8c" stroke-width="1.1"/><path d="M11.2 1 L7.4 5.2 V9" fill="none" stroke="#333" stroke-width="1.2"/><rect x="4.6" y="5.2" width="2.8" height="3.8" fill="#555"/><rect x="4.3" y="7.8" width="3.4" height="1.4" fill="#111"/></svg>
<div class="hd" style="left:831px;top:51px;width:64px;height:16px;background:linear-gradient(#FBFCFD,#D8E0EB);border-bottom-color:#B4C8E0"></div>
<div class="g gc" style="left:825px;top:53px;width:64px;text-align:center;color:#2a2a34"><span class="gs">K</span></div>
<svg class="filt" style="left:882px;top:52px;width:12px;height:10px" viewBox="0 0 12 10"><path d="M0.8 1 H11.2" stroke="#c4c4c4" stroke-width="1"/><path d="M0.8 1 L4.6 5.2 V9" fill="none" stroke="#8c8c8c" stroke-width="1.1"/><path d="M11.2 1 L7.4 5.2 V9" fill="none" stroke="#333" stroke-width="1.2"/><rect x="4.6" y="5.2" width="2.8" height="3.8" fill="#555"/><rect x="4.3" y="7.8" width="3.4" height="1.4" fill="#111"/></svg>
<div class="hd" style="left:895px;top:51px;width:70px;height:16px;background:linear-gradient(#FBFCFD,#D8E0EB);border-bottom-color:#B4C8E0"></div>
<div class="g gc" style="left:889px;top:53px;width:70px;text-align:center;color:#2a2a34"><span class="gs">L</span></div>
<svg class="filt" style="left:952px;top:52px;width:12px;height:10px" viewBox="0 0 12 10"><path d="M0.8 1 H11.2" stroke="#c4c4c4" stroke-width="1"/><path d="M0.8 1 L4.6 5.2 V9" fill="none" stroke="#8c8c8c" stroke-width="1.1"/><path d="M11.2 1 L7.4 5.2 V9" fill="none" stroke="#333" stroke-width="1.2"/><rect x="4.6" y="5.2" width="2.8" height="3.8" fill="#555"/><rect x="4.3" y="7.8" width="3.4" height="1.4" fill="#111"/></svg>
<div class="hd" style="left:965px;top:51px;width:70px;height:16px;background:linear-gradient(#FBFCFD,#D8E0EB);border-bottom-color:#B4C8E0"></div>
<div class="g gc" style="left:959px;top:53px;width:70px;text-align:center;color:#2a2a34"><span class="gs">M</span></div>
<svg class="filt" style="left:1022px;top:52px;width:12px;height:10px" viewBox="0 0 12 10"><path d="M0.8 1 H11.2" stroke="#c4c4c4" stroke-width="1"/><path d="M0.8 1 L4.6 5.2 V9" fill="none" stroke="#8c8c8c" stroke-width="1.1"/><path d="M11.2 1 L7.4 5.2 V9" fill="none" stroke="#333" stroke-width="1.2"/><rect x="4.6" y="5.2" width="2.8" height="3.8" fill="#555"/><rect x="4.3" y="7.8" width="3.4" height="1.4" fill="#111"/></svg>
<div class="hd" style="left:1035px;top:51px;width:81px;height:16px;background:linear-gradient(#FBFCFD,#D8E0EB);border-bottom-color:#B4C8E0"></div>
<div class="g gc" style="left:1029px;top:53px;width:81px;text-align:center;color:#2a2a34"><span class="gs">N</span></div>
<svg class="filt" style="left:1103px;top:52px;width:12px;height:10px" viewBox="0 0 12 10"><path d="M0.8 1 H11.2" stroke="#c4c4c4" stroke-width="1"/><path d="M0.8 1 L4.6 5.2 V9" fill="none" stroke="#8c8c8c" stroke-width="1.1"/><path d="M11.2 1 L7.4 5.2 V9" fill="none" stroke="#333" stroke-width="1.2"/><rect x="4.6" y="5.2" width="2.8" height="3.8" fill="#555"/><rect x="4.3" y="7.8" width="3.4" height="1.4" fill="#111"/></svg>
<div class="hd" style="left:1116px;top:51px;width:81px;height:16px;background:linear-gradient(#FFF0D2,#F7BF74);border-bottom-color:#F2A448"></div>
<div class="g gc" style="left:1110px;top:53px;width:81px;text-align:center;color:#2a2a34"><span class="gs">O</span></div>
<svg class="a" style="left:1184px;top:53px" width="4" height="5"><path d="M0 0.5 L3 3.5" stroke="#9a9a9a" stroke-width="1"/></svg>
</div>
<div class="a" style="left:1196px;top:126px;width:13px;height:454px;background:#7497C4"></div>
<div class="a" style="left:1197px;top:126px;width:11px;height:4px;background:linear-gradient(#F4F7FB,#C9D6E8);border:1px solid #8DA6C9"></div>
<div class="a" style="left:1197px;top:130px;width:11px;height:13px;background:linear-gradient(90deg,#F7F9FC,#D5DEEA);border:1px solid #5E7AA9;border-radius:1px"></div>
<svg class="a" style="left:1199px;top:134px" width="7" height="4"><path d="M0 4 L3.5 0 L7 4 Z" fill="#3E4B66"/></svg>
<div class="a" style="left:1197px;top:144px;width:11px;height:19px;background:linear-gradient(90deg,#F7F9FC,#D5DEEA);border:1px solid #5E7AA9;border-radius:1px"></div>
<div class="a" style="left:1199px;top:150px;width:7px;height:5px;background:repeating-linear-gradient(#6d778a 0 1px,transparent 1px 2px)"></div>
<div class="a" style="left:1197px;top:566px;width:11px;height:13px;background:linear-gradient(90deg,#F7F9FC,#D5DEEA);border:1px solid #5E7AA9;border-radius:1px"></div>
<svg class="a" style="left:1199px;top:571px" width="7" height="4"><path d="M0 0 L3.5 4 L7 0 Z" fill="#3E4B66"/></svg>
<div class="a" style="left:8px;top:593px;width:1202px;height:1px;background:#EEF3FA"></div>
<div class="a" style="left:9px;top:580px;width:1200px;height:13px;background:#7497C4"></div>
<div class="a" style="left:1196px;top:580px;width:13px;height:13px;background:#8FADD3"></div>
<div class="a" style="left:9px;top:580px;width:4px;height:13px;background:linear-gradient(#F4F7FB,#C9D6E8);border:1px solid #8DA6C9"></div>
<div class="a" style="left:13px;top:580px;width:13px;height:13px;background:linear-gradient(#F7F9FC,#D5DEEA);border:1px solid #5E7AA9;border-radius:1px"></div>
<svg class="a" style="left:17px;top:583px" width="4" height="7"><path d="M4 0 L0 3.5 L4 7 Z" fill="#3E4B66"/></svg>
<div class="a" style="left:26px;top:580px;width:1105px;height:13px;background:linear-gradient(#F6F8FB,#DCE3EC 60%,#C3CEDC);border:1px solid #5F7DAA;border-radius:1px"></div>
<div class="a" style="left:576px;top:582px;width:7px;height:8px;background:repeating-linear-gradient(90deg,#6d778a 0 1px,transparent 1px 2px)"></div>
<div class="a" style="left:1182px;top:580px;width:13px;height:13px;background:linear-gradient(#F7F9FC,#D5DEEA);border:1px solid #5E7AA9;border-radius:1px"></div>
<svg class="a" style="left:1187px;top:583px" width="4" height="7"><path d="M0 0 L4 3.5 L0 7 Z" fill="#3E4B66"/></svg>
</body></html>
